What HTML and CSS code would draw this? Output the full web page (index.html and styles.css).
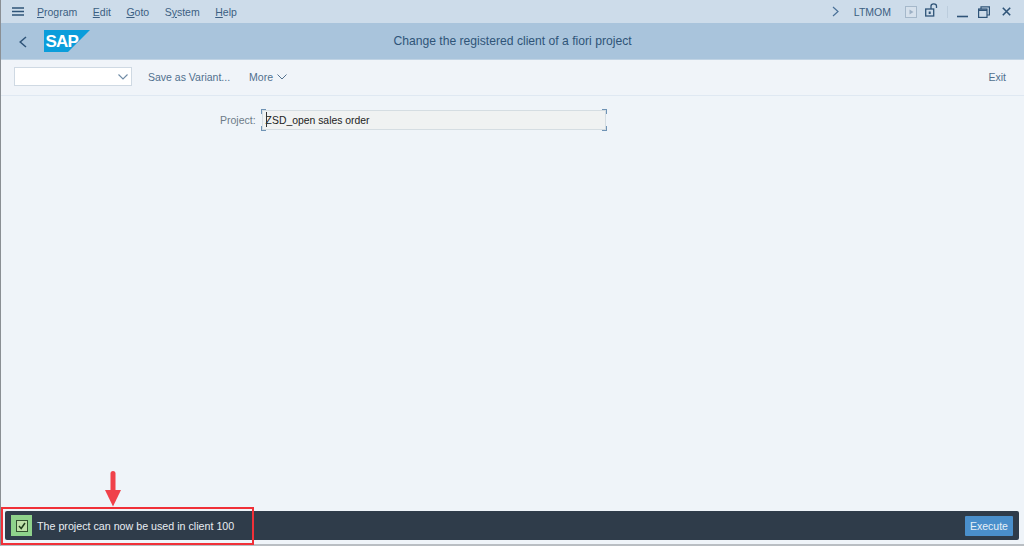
FILE: index.html
```html
<!DOCTYPE html>
<html lang="en">
<head>
<meta charset="utf-8">
<title>Change the registered client of a fiori project</title>
<link rel="stylesheet" href="styles.css">
</head>
<body>
<div class="window">
  <header class="menubar">
    <svg class="burger" width="12" height="9" viewBox="0 0 12 9"><path d="M0 1H12M0 4.500H12M0 8H12" stroke="#2f5478" stroke-width="1.400" fill="none"/></svg>
    <nav class="menus">
      <span class="menu"><u>P</u>rogram</span>
      <span class="menu"><u>E</u>dit</span>
      <span class="menu"><u>G</u>oto</span>
      <span class="menu">S<u>y</u>stem</span>
      <span class="menu"><u>H</u>elp</span>
    </nav>
    <div class="sysarea">
      <svg class="chev-right" width="7" height="11" viewBox="0 0 7 11"><path d="M1 1L6 5.500L1 10" stroke="#4a7198" stroke-width="1.200" fill="none"/></svg>
      <span class="tcode">LTMOM</span>
      <svg class="play" width="12" height="12" viewBox="0 0 12 12"><rect x="0.500" y="0.500" width="11" height="11" fill="#d6e1ec" stroke="#a5b8ca"/><path d="M4.500 3.500L8.500 6L4.500 8.500Z" fill="#9db1c5"/></svg>
      <svg class="lock" width="14" height="14" viewBox="0 0 14 14"><rect x="0.700" y="6" width="8" height="7" fill="none" stroke="#2f5478" stroke-width="1.300"/><rect x="3.700" y="8.500" width="2" height="2.500" fill="#2f5478"/><path d="M6 6V3C6 1.500 7 0.800 8.700 0.800C10.500 0.800 11.500 1.500 11.500 3V5" fill="none" stroke="#2f5478" stroke-width="1.300"/></svg>
      <span class="sep"></span>
      <svg class="min" width="11" height="12" viewBox="0 0 11 12"><path d="M0 10.500H11" stroke="#2f5478" stroke-width="1.600"/></svg>
      <svg class="max" width="12" height="12" viewBox="0 0 12 12"><rect x="0.600" y="3" width="8.400" height="8.400" fill="none" stroke="#2f5478" stroke-width="1.200"/><path d="M0.600 4.200H9" stroke="#2f5478" stroke-width="1.600"/><path d="M3 3V0.800H11.400V9H9" fill="none" stroke="#2f5478" stroke-width="1.200"/></svg>
      <svg class="close" width="9" height="9" viewBox="0 0 9 9"><path d="M0.800 0.800L8.200 8.200M8.200 0.800L0.800 8.200" stroke="#2f5478" stroke-width="1.600"/></svg>
    </div>
  </header>

  <div class="titlebar">
    <svg class="back" width="8" height="12" viewBox="0 0 8 12"><path d="M7 1L1.200 6L7 11" stroke="#2f5478" stroke-width="1.500" fill="none"/></svg>
    <svg class="logo" width="46" height="22" viewBox="0 0 46 22" aria-label="SAP logo"><path d="M0 0H46L24 22H0Z" fill="#0a9ddb"/><text x="1.500" y="16.500" class="logo-text">SAP</text></svg>
    <h1 class="title">Change the registered client of a fiori project</h1>
  </div>

  <div class="toolbar">
    <div class="variant">
      <svg width="10" height="6" viewBox="0 0 10 6"><path d="M0.500 0.500L5 5L9.500 0.500" stroke="#6f8ba6" stroke-width="1.100" fill="none"/></svg>
    </div>
    <span class="tool save">Save as Variant...</span>
    <span class="tool more">More
      <svg width="10" height="6" viewBox="0 0 10 6"><path d="M0.500 0.500L5 5L9.500 0.500" stroke="#53718f" stroke-width="1" fill="none"/></svg>
    </span>
    <span class="tool exit">Exit</span>
  </div>

  <main class="content">
    <div class="field-row">
      <label class="field-label">Project:</label>
      <div class="field">
        <span class="caret"></span>
        <span class="field-text">ZSD_open sales order</span>
        <i class="corner tl"></i><i class="corner tr"></i><i class="corner bl"></i><i class="corner br"></i>
      </div>
    </div>
  </main>

  <footer class="footer">
    <div class="statusbar">
      <span class="status-icon">
        <svg width="12" height="12" viewBox="0 0 12 12"><rect x="0.500" y="0.500" width="11" height="11" fill="#bfe0a8" stroke="#33502f"/><path d="M3 6L5.200 8.500L9 3" stroke="#1f3d1c" stroke-width="1.500" fill="none"/></svg>
      </span>
      <span class="status-text">The project can now be used in client 100</span>
      <button class="execute">Execute</button>
    </div>
  </footer>

  <div class="highlight"></div>
  <svg class="arrow" width="16" height="36" viewBox="0 0 16 36"><path d="M8 2.500V20" stroke="#f0414a" stroke-width="5" stroke-linecap="round"/><path d="M0 19H16L8 35.500Z" fill="#f0414a"/></svg>
</div>
</body>
</html>
```

FILE: styles.css
```css
* { box-sizing: border-box; }
html, body { margin: 0; height: 100%; }
body { font-family: "Liberation Sans", sans-serif; color: #32577a; overflow: hidden; }
.window { position: relative; width: 1024px; height: 546px; display: flex; flex-direction: column; background: #eff4f9; border-left: 1px solid #8a8f94; border-bottom: 2px solid #b9bec3; }

.menubar { height: 23px; flex: none; display: flex; align-items: center; background: #cddcea; padding-left: 11px; }
.burger { flex: none; }
.menus { display: flex; gap: 15.500px; margin-left: 13px; font-size: 10.500px; color: #3c5f82; }
.menu u { text-decoration: underline; text-underline-offset: 1px; }
.sysarea { margin-left: auto; display: flex; align-items: center; }
.tcode { margin-left: 15px; font-size: 10.500px; color: #3c5f82; }
.play { margin-left: 14px; }
.lock { margin-left: 8px; margin-top: -3px; }
.sep { width: 1px; height: 12px; background: #bccddd; margin: 0 9px 0 8px; }
.max { margin-left: 10px; }
.close { margin: 0 13px 0 12px; }

.titlebar { position: relative; height: 37px; flex: none; display: flex; align-items: center; justify-content: center; background: #a9c4dc; border-bottom: 1px solid #c0d3e4; }
.back { position: absolute; left: 18px; top: 13px; }
.logo { position: absolute; left: 43px; top: 7px; }
.logo-text { font-weight: 700; font-size: 17px; letter-spacing: -0.800px; fill: #fff; }
.title { margin: 0; font-size: 12.150px; font-weight: 400; color: #2f5478; }

.toolbar { height: 36px; flex: none; display: flex; align-items: center; padding: 0 18px 2px 13px; border-bottom: 1px solid #dfe8f2; background: #f0f4f9; }
.variant { width: 118px; height: 19px; display: flex; align-items: center; justify-content: flex-end; padding-right: 3px; background: #fff; border: 1px solid #cfd9e3; }
.tool { font-size: 10.500px; color: #51708e; }
.save { margin-left: 16px; }
.more { margin-left: 19px; display: flex; align-items: center; gap: 4px; }
.exit { margin-left: auto; }

.content { flex: 1; min-height: 0; padding: 14px 0 0 219px; }
.field-row { display: flex; align-items: center; gap: 6px; }
.field-label { font-size: 10.500px; color: #6d7b88; }
.field { position: relative; width: 344px; height: 20px; display: flex; align-items: center; padding-left: 3px; background: #f0f2f2; border: 1px solid #d5dde2; font-size: 10.400px; color: #222; }
.caret { position: absolute; left: 3px; top: 1px; width: 1px; height: 15px; background: #333; }
.corner { position: absolute; width: 5px; height: 5px; border: 0 solid #6f93b5; }
.tl { left: -2px; top: -2px; border-width: 1px 0 0 1px; }
.tr { right: -2px; top: -2px; border-width: 1px 1px 0 0; }
.bl { left: -2px; bottom: -2px; border-width: 0 0 1px 1px; }
.br { right: -2px; bottom: -2px; border-width: 0 1px 1px 0; }

.footer { flex: none; padding: 0 5px 4px 4px; }
.statusbar { height: 29px; display: flex; align-items: center; padding: 0 6px 0 6px; background: #2f3c4a; border-radius: 2px; }
.status-icon { width: 21px; height: 21px; flex: none; display: flex; align-items: center; justify-content: center; background: #8fd28b; }
.status-text { margin-left: 5px; font-size: 10.700px; color: #e8edf2; }
.execute { margin-left: auto; width: 48px; height: 20px; padding: 0; border: 0; border-radius: 1px; background: #4a8fcb; color: #e6f0f8; font: 10.500px "Liberation Sans", sans-serif; }

.highlight { position: absolute; left: 0; top: 507px; width: 253px; height: 38px; border: 2px solid #f03038; pointer-events: none; }
.arrow { position: absolute; left: 104px; top: 471px; }
```
